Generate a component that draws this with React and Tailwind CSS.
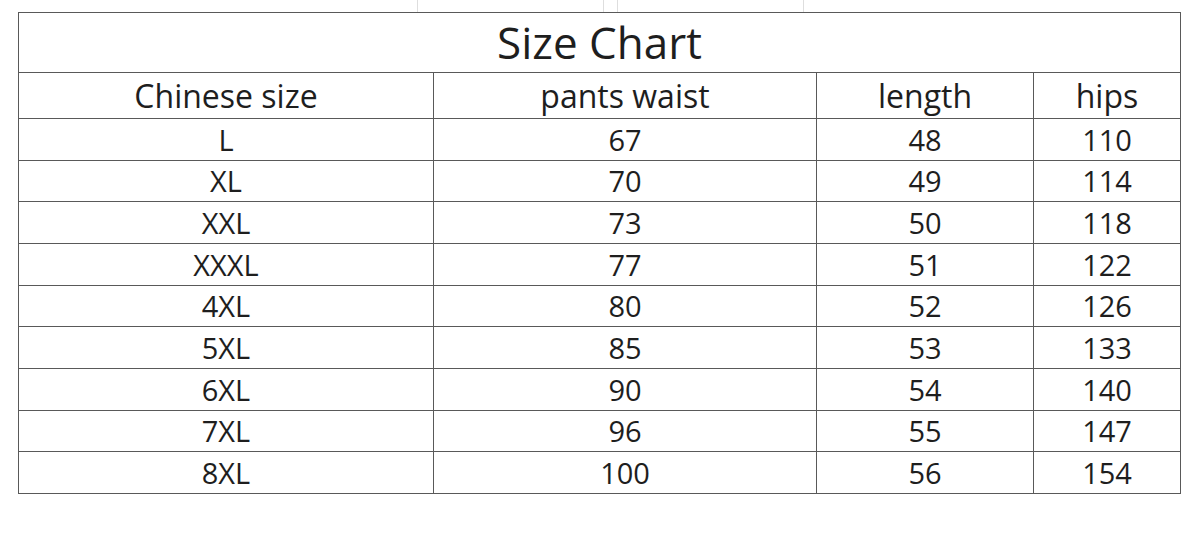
import React from "react";

const rows = [
  ["L", "67", "48", "110"],
  ["XL", "70", "49", "114"],
  ["XXL", "73", "50", "118"],
  ["XXXL", "77", "51", "122"],
  ["4XL", "80", "52", "126"],
  ["5XL", "85", "53", "133"],
  ["6XL", "90", "54", "140"],
  ["7XL", "96", "55", "147"],
  ["8XL", "100", "56", "154"],
];

const cell = "border border-[#595959] text-center font-normal p-0";

const App = () => {
  return (
    <div
      className="w-[1200px] h-[542px] bg-white text-[#1e1e1e] overflow-hidden"
      style={{ fontFamily: '"Open Sans", "Noto Sans", sans-serif' }}
    >
      {/* faint edges of the boxes above */}
      <div className="flex h-[12px] pl-[417px]">
        <div className="w-[187px] border-x border-[#dedede]" />
        <div className="w-[13px]" />
        <div className="w-[187px] border-x border-[#dedede]" />
      </div>
      <div className="pl-[18px]">
        <table className="border-collapse table-fixed w-[1162px]">
          <colgroup>
            <col className="w-[415px]" />
            <col className="w-[383px]" />
            <col className="w-[217px]" />
            <col className="w-[147px]" />
          </colgroup>
          <thead>
            <tr className="h-[60px]">
              <th colSpan={4} className={`${cell} text-[44px] leading-none pb-[2px]`}>
                Size Chart
              </th>
            </tr>
            <tr className="h-[46px]">
              <th className={`${cell} text-[32px] leading-none`}>Chinese size</th>
              <th className={`${cell} text-[32px] leading-none`}>pants waist</th>
              <th className={`${cell} text-[32px] leading-none`}>length</th>
              <th className={`${cell} text-[32px] leading-none`}>hips</th>
            </tr>
          </thead>
          <tbody>
            {rows.map((r) => (
              <tr key={r[0]} className="h-[41.67px]">
                {r.map((v, i) => (
                  <td key={i} className={`${cell} text-[29px] leading-none`}>
                    {v}
                  </td>
                ))}
              </tr>
            ))}
          </tbody>
        </table>
      </div>
    </div>
  );
};

export default App;
